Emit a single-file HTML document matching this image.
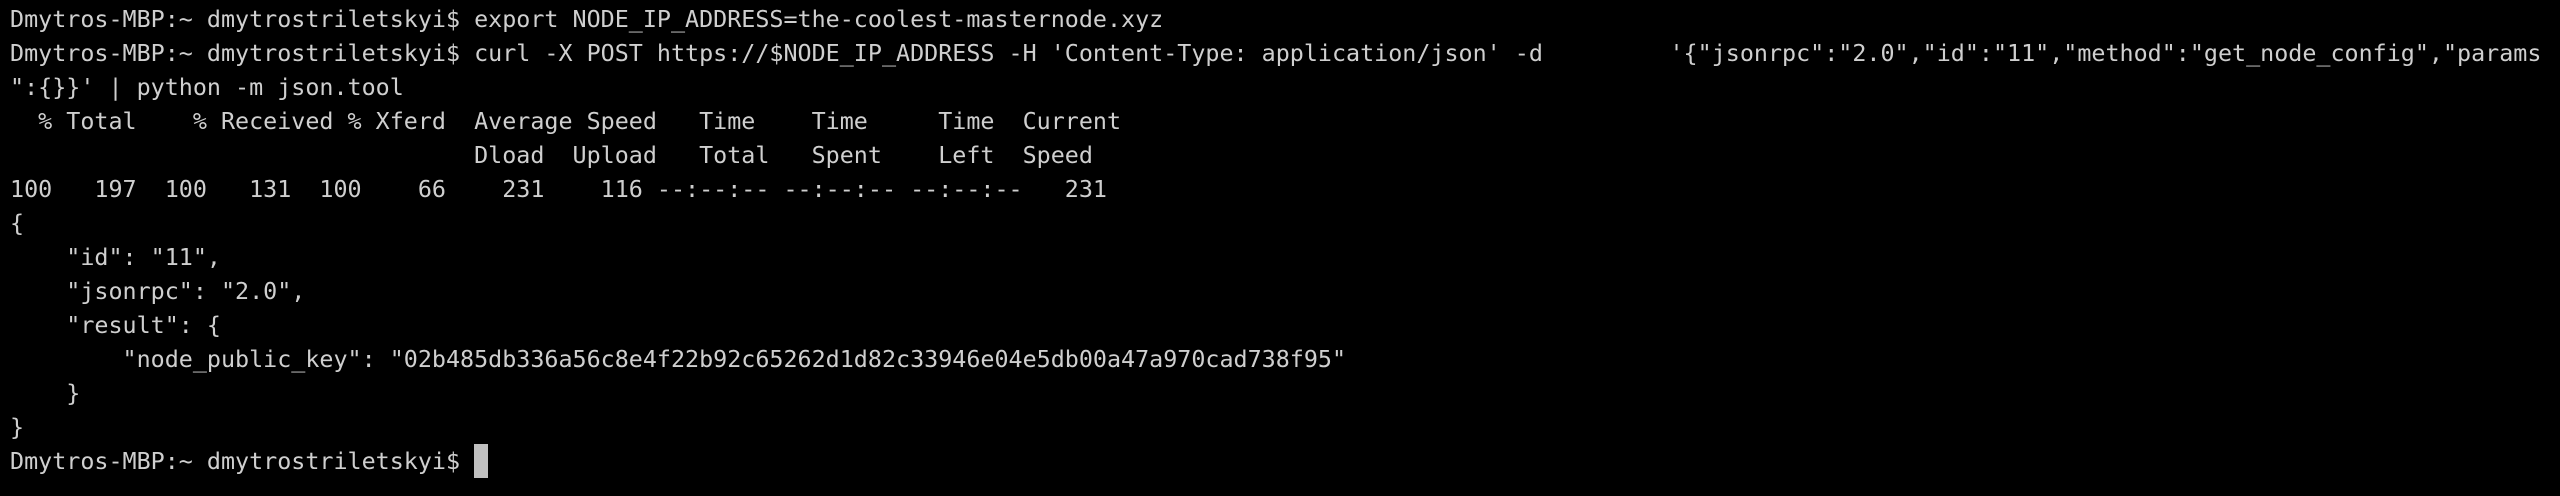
<!DOCTYPE html>
<html><head><meta charset="utf-8"><style>
html,body{margin:0;padding:0;background:#000;width:2560px;height:496px;overflow:hidden}
pre{margin:0;position:absolute;left:10px;top:2px;font-family:"DejaVu Sans Mono","Liberation Mono",monospace;font-size:23.36px;line-height:34px;color:#cfcfcf;white-space:pre}
.cur{display:inline-block;width:14px;height:34px;background:#c0c0c0;vertical-align:top;margin-left:0}
</style></head><body><pre>Dmytros-MBP:~ dmytrostriletskyi$ export NODE_IP_ADDRESS=the-coolest-masternode.xyz
Dmytros-MBP:~ dmytrostriletskyi$ curl -X POST https://$NODE_IP_ADDRESS -H 'Content-Type: application/json' -d         '{"jsonrpc":"2.0","id":"11","method":"get_node_config","params
":{}}' | python -m json.tool
  % Total    % Received % Xferd  Average Speed   Time    Time     Time  Current
                                 Dload  Upload   Total   Spent    Left  Speed
100   197  100   131  100    66    231    116 --:--:-- --:--:-- --:--:--   231
{
    "id": "11",
    "jsonrpc": "2.0",
    "result": {
        "node_public_key": "02b485db336a56c8e4f22b92c65262d1d82c33946e04e5db00a47a970cad738f95"
    }
}
Dmytros-MBP:~ dmytrostriletskyi$ <span class="cur"></span></pre></body></html>
